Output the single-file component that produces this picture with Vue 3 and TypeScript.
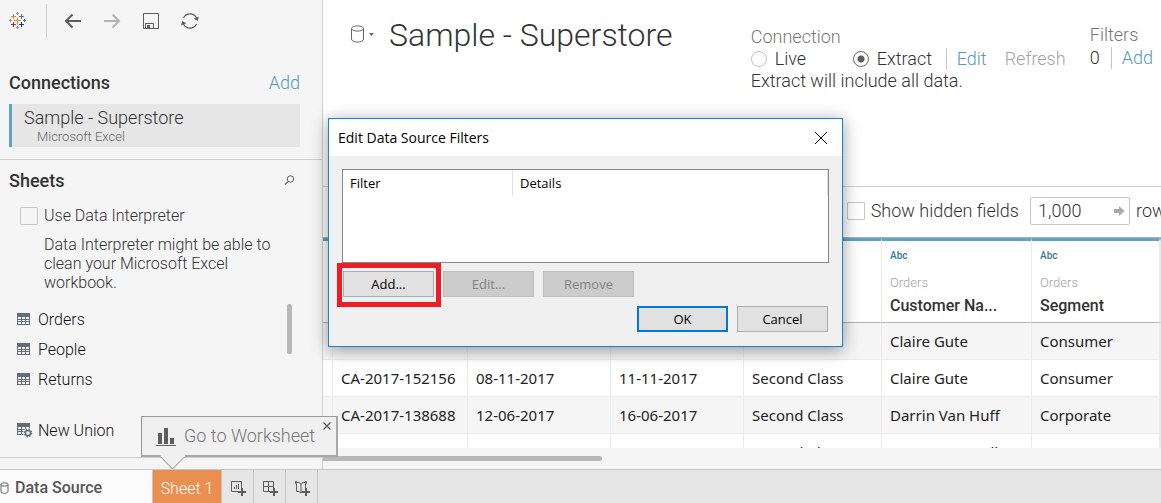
<script setup lang="ts">
import { ref } from 'vue'

interface Column {
  key: string
  label: string
}

const sheets: string[] = ['Orders', 'People', 'Returns']

const columns: Column[] = [
  { key: 'id', label: 'Order ID' },
  { key: 'ordered', label: 'Order Date' },
  { key: 'shipped', label: 'Ship Date' },
  { key: 'mode', label: 'Ship Mode' },
  { key: 'customer', label: 'Customer Na...' },
  { key: 'segment', label: 'Segment' },
]

const rows: string[][] = [
  ['CA-2017-152156', '08-11-2017', '11-11-2017', 'Second Class', 'Claire Gute', 'Consumer'],
  ['CA-2017-152156', '08-11-2017', '11-11-2017', 'Second Class', 'Claire Gute', 'Consumer'],
  ['CA-2017-138688', '12-06-2017', '16-06-2017', 'Second Class', 'Darrin Van Huff', 'Corporate'],
  ['US-2016-108966', '11-10-2016', '18-10-2016', 'Second Class', "Sean O'Donnell", 'Consumer'],
]

const connection = ref<string>('extract')
const interpreter = ref<boolean>(false)
const showHidden = ref<boolean>(false)
const rowCount = ref<string>('1,000')
</script>

<template>
  <div class="app">
    <div class="workspace">
      <aside class="sidebar">
        <nav class="tools">
          <span class="logo">
            <svg width="18" height="18" viewBox="0 0 18 18" fill="none">
              <path d="M8.500 5.500v7M5 8.500h7" stroke="#e8862c" />
              <path d="M4.500 2v5M2 4.500h5" stroke="#e8862c" />
              <path d="M12.500 2v5M10 4.500h5" stroke="#4e79a0" />
              <path d="M4.500 10v5M2 12.500h5" stroke="#c72037" />
              <path d="M12.500 10v5M10 12.500h5" stroke="#1f3567" />
              <path d="M8.500 0v3M7 1.500h3M8.500 14v3M7 15.500h3M1.500 7v3M0 8.500h3" stroke="#7c9fb0" />
              <path d="M15.500 7v3M14 8.500h3" stroke="#5b6591" />
            </svg>
          </span>
          <button type="button" aria-label="Back">
            <svg width="18" height="18" viewBox="0 0 18 18" fill="none" stroke="#5d5d5d" stroke-width="2">
              <path d="M17 9H2M8.500 2.500L2 9l6.500 6.500" />
            </svg>
          </button>
          <button type="button" aria-label="Forward">
            <svg width="18" height="18" viewBox="0 0 18 18" fill="none" stroke="#b4b4b4" stroke-width="2">
              <path d="M1 9h15M9.500 2.500L16 9l-6.500 6.500" />
            </svg>
          </button>
          <button type="button" aria-label="Save">
            <svg width="18" height="18" viewBox="0 0 18 18" fill="none" stroke="#5d5d5d">
              <path d="M1.500 1.500h15v15h-15zM3.500 16V11.500h8V16" />
              <path d="M5 13h3v3H5z" fill="#5d5d5d" stroke="none" />
            </svg>
          </button>
          <button type="button" aria-label="Refresh data">
            <svg width="18" height="18" viewBox="0 0 18 18" fill="none" stroke="#5d5d5d" stroke-width="1.200">
              <path d="M2.500 6A7.200 7.200 0 0 1 15.500 6M15.500 12A7.200 7.200 0 0 1 2.500 12" />
              <path d="M17.800 4.500L16.800 9L12.800 6.800zM.2 13.500L1.200 9L5.200 11.200z" fill="#5d5d5d" stroke="none" />
            </svg>
          </button>
        </nav>

        <section class="connections">
          <header>
            <h2>Connections</h2>
            <a href="#">Add</a>
          </header>
          <button type="button" class="connection-card">
            <strong>Sample - Superstore</strong>
            <small>Microsoft Excel</small>
          </button>
        </section>

        <section class="sheets">
          <header>
            <h2>Sheets</h2>
            <button type="button" aria-label="Search sheets">
              <svg width="11" height="11" viewBox="0 0 11 11" fill="none" stroke="#5d5d5d">
                <circle cx="6.500" cy="4" r="3.200" />
                <path d="M4.200 6.400L1 9.500" stroke-width="1.300" />
              </svg>
            </button>
          </header>
          <label class="check">
            <input v-model="interpreter" type="checkbox" />
            Use Data Interpreter
          </label>
          <p>Data Interpreter might be able to clean your Microsoft Excel workbook.</p>
          <div class="sheet-list">
            <ul>
              <li v-for="sheet in sheets" :key="sheet">
                <svg width="14" height="13" viewBox="0 0 14 13">
                  <path d="M0 0h13v12H0z" fill="#626c7c" />
                  <path d="M1 4h3v2H1zM5 4h3v2H5zM9 4h3v2H9zM1 7h3v1H1zM5 7h3v1H5zM9 7h3v1H9zM1 9h3v2H1zM5 9h3v2H5zM9 9h3v2H9z" fill="#f5f5f5" />
                </svg>
                {{ sheet }}
              </li>
            </ul>
            <span class="thumb"></span>
          </div>
          <button type="button" class="union">
            <svg width="16" height="15" viewBox="0 0 16 15">
              <path d="M0 0h13v12H0z" fill="#626c7c" />
              <path d="M1 4h3v2H1zM5 4h3v2H5zM9 4h3v2H9zM1 7h3v1H1zM5 7h3v1H5zM1 9h3v2H1zM5 9h3v2H5z" fill="#f5f5f5" />
              <circle cx="11" cy="10" r="4.800" fill="#f5f5f5" />
              <circle cx="11" cy="10" r="2.600" fill="none" stroke="#626c7c" stroke-width="1.500" />
              <circle cx="11" cy="10" r="3.700" fill="none" stroke="#626c7c" stroke-width="1.200" stroke-dasharray="1.450" />
            </svg>
            New Union
          </button>
        </section>
      </aside>

      <main class="main">
        <header class="source">
          <button type="button" class="source-menu" aria-label="Data source options">
            <svg width="24" height="18" viewBox="0 0 24 18" fill="none" stroke="#666">
              <ellipse cx="7.500" cy="3.500" rx="6" ry="2.600" />
              <path d="M1.500 3.500v10.500c0 4 12 4 12 0V3.500" />
              <path d="M19 8h5l-2.500 3z" fill="#666" stroke="none" />
            </svg>
          </button>
          <h1>Sample - Superstore</h1>
          <div class="mode">
            <span class="caption">Connection</span>
            <div class="mode-row">
              <label class="live"><input v-model="connection" type="radio" value="live" />Live</label>
              <label class="extract"><input v-model="connection" type="radio" value="extract" />Extract</label>
              <a href="#" class="ruled">Edit</a>
              <span class="disabled">Refresh</span>
            </div>
            <span>Extract will include all data.</span>
          </div>
          <div class="filters">
            <span class="caption">Filters</span>
            <div class="filter-row">
              <span>0</span>
              <a href="#" class="ruled">Add</a>
            </div>
          </div>
        </header>

        <div class="grid-tools">
          <label class="check">
            <input v-model="showHidden" type="checkbox" />
            Show hidden fields
          </label>
          <div class="row-count">
            <input id="row-count" v-model="rowCount" type="text" />
            <svg width="11" height="10" viewBox="0 0 11 10"><path d="M0 3h5V0l5.500 5L5 10V7H0z" fill="#aaa" /></svg>
          </div>
          <label for="row-count" class="row-label">rows</label>
        </div>

        <div class="grid">
          <table>
            <colgroup>
              <col class="c-gutter" />
              <col v-for="column in columns" :key="column.key" :class="'c-' + column.key" />
              <col />
            </colgroup>
            <thead>
              <tr>
                <td></td>
                <th v-for="column in columns" :key="column.key" scope="col">
                  <span class="type">Abc</span>
                  <span class="origin">Orders</span>
                  <span>{{ column.label }}</span>
                </th>
                <td></td>
              </tr>
            </thead>
            <tbody>
              <tr v-for="(row, index) in rows" :key="index">
                <td></td>
                <td v-for="(cell, position) in row" :key="position">{{ cell }}</td>
                <td></td>
              </tr>
            </tbody>
          </table>
        </div>
        <div class="scroll"><span></span></div>
      </main>
    </div>

    <footer class="tabs">
      <button type="button" class="tab source-tab">
        <svg width="10" height="12" viewBox="0 0 10 12" fill="none" stroke="#666">
          <ellipse cx="4.500" cy="2.500" rx="3.500" ry="1.700" />
          <path d="M1 2.500v7c0 2.400 7 2.400 7 0v-7" />
        </svg>
        Data Source
      </button>
      <div class="sheet-tab">
        <button type="button" class="tab active">Sheet 1</button>
        <div class="hint" role="tooltip">
          <svg width="20" height="19" viewBox="0 0 20 19" fill="#5d5d5d">
            <path d="M2 6h4v11H2zM8 1h4v16H8zM14 11h4v6h-4zM0 18h20v1H0z" />
          </svg>
          <span>Go to Worksheet</span>
          <button type="button" aria-label="Close hint">
            <svg width="8" height="8" viewBox="0 0 8 8" stroke="#555" stroke-width="1.200"><path d="M.5.5l7 7M7.500.5l-7 7" /></svg>
          </button>
          <svg class="pointer" width="26" height="15" viewBox="0 0 26 15">
            <path d="M.5 0v1.500L12.500 14L25 1.500V0" fill="#f0f0f0" />
            <path d="M.5 1.500L12.500 14L25 1.500" fill="none" stroke="#888" />
          </svg>
        </div>
      </div>
      <button type="button" class="tab add" aria-label="New worksheet">
        <svg width="16" height="16" viewBox="0 0 16 16" fill="none" stroke="#5d5d5d">
          <path d="M7 10.500H.5V.5h10V7M3.500 6v2M5.500 4v4M7.500 3v5" />
          <path d="M11 7v8M7 11h8" stroke-width="2" />
        </svg>
      </button>
      <button type="button" class="tab add" aria-label="New dashboard">
        <svg width="16" height="16" viewBox="0 0 16 16" fill="none" stroke="#5d5d5d">
          <path d="M7 10.500H.5V.5h10V7M5.500.5v10M.5 5.500h10" />
          <path d="M11 7v8M7 11h8" stroke-width="2" />
        </svg>
      </button>
      <button type="button" class="tab add" aria-label="New story">
        <svg width="16" height="16" viewBox="0 0 16 16" fill="none" stroke="#5d5d5d">
          <path d="M6 12V3L4 1.500H1.500V.5H.5V2.500H1.500V10.500H4L6 12L7 11M6 3L8 1.500H10.500V.5H11.500V2.500H10.500V7" />
          <path d="M11 7v8M7 11h8" stroke-width="2" />
        </svg>
      </button>
    </footer>

    <div class="dialog" role="dialog" aria-labelledby="dialog-title">
      <header>
        <h2 id="dialog-title">Edit Data Source Filters</h2>
        <button type="button" aria-label="Close">
          <svg width="14" height="14" viewBox="0 0 14 14" stroke="#000"><path d="M1 1l12 12M13 1L1 13" /></svg>
        </button>
      </header>
      <div class="dialog-body">
        <div class="filter-list">
          <table>
            <thead>
              <tr>
                <th scope="col" class="filter-name">Filter</th>
                <th scope="col">Details</th>
              </tr>
            </thead>
          </table>
        </div>
        <div class="actions">
          <button type="button" class="marked">Add...</button>
          <button type="button" disabled>Edit...</button>
          <button type="button" disabled>Remove</button>
        </div>
        <div class="actions confirm">
          <button type="button" class="default">OK</button>
          <button type="button">Cancel</button>
        </div>
      </div>
    </div>
  </div>
</template>

<style>
body {
  margin: 0;
}
</style>

<style scoped>
* {
  box-sizing: border-box;
}

.app {
  position: relative;
  display: flex;
  flex-direction: column;
  height: 100vh;
  overflow: hidden;
  background: #fff;
  color: #333;
  font: 300 16px/22px Roboto, "Liberation Sans", sans-serif;
}

h1,
h2,
p,
ul {
  margin: 0;
  padding: 0;
}

button {
  padding: 0;
  border: 0;
  background: none;
  color: inherit;
  font: inherit;
}

svg {
  display: block;
  flex: none;
}

a {
  color: #4f9cbf;
  text-decoration: none;
}

input {
  margin: 0;
  font: inherit;
  color: inherit;
}

input[type="checkbox"] {
  appearance: none;
  flex: none;
  width: 18px;
  height: 18px;
  border: 1px solid #c6c6c6;
  border-radius: 1px;
}

input[type="radio"] {
  appearance: none;
  flex: none;
  width: 16px;
  height: 16px;
  border: 1px solid #c2c2c2;
  border-radius: 50%;
}

input[type="radio"]:checked {
  border-color: #666;
  background: radial-gradient(circle, #5d5d5d 3px, #fff 4px);
}

.check {
  display: flex;
  align-items: center;
  gap: 6px;
}

.workspace {
  display: flex;
  flex: 1;
  min-height: 0;
}

/* Sidebar */
.sidebar {
  display: flex;
  flex-direction: column;
  flex: none;
  width: 323px;
  border-right: 1px solid #cfcfcf;
  background: #f5f5f5;
}

.tools {
  display: flex;
  align-items: center;
  gap: 21px;
  height: 42px;
  padding-left: 9px;
}

.logo {
  display: flex;
  align-items: center;
  width: 38px;
  height: 34px;
  margin-right: -4px;
  border-right: 1px solid #cfcfcf;
}

.sidebar h2 {
  font-size: 18px;
  font-weight: 500;
}

.sidebar section > header {
  display: flex;
  align-items: center;
  justify-content: space-between;
}

.connections {
  padding: 30px 22px 12px 9px;
  border-bottom: 1px solid #cfcfcf;
}

.connections > header {
  height: 22px;
}

.connections > header a {
  font-size: 18px;
}

.connection-card {
  display: flex;
  flex-direction: column;
  width: 100%;
  height: 43px;
  margin-top: 10px;
  padding: 4px 12px;
  border-left: 3px solid #5fa2c4;
  background: #e6e6e6;
  text-align: left;
}

.connection-card strong {
  font-size: 18px;
  font-weight: 300;
  line-height: 20px;
}

.connection-card small {
  padding-left: 13px;
  color: #666;
  font-size: 13px;
  line-height: 18px;
}

.sheets {
  flex: 1;
  margin-bottom: 11px;
  border-bottom: 1px solid #cfcfcf;
}

.sheets > header {
  height: 41px;
  padding: 0 27px 0 9px;
}

.sheets .check {
  height: 30px;
  padding-left: 20px;
}

.sheets p {
  padding: 4px 40px 12px 44px;
  line-height: 19px;
}

.sheet-list {
  display: flex;
  justify-content: space-between;
  height: 111px;
  padding-right: 30px;
}

.sheet-list ul {
  list-style: none;
  color: #111;
}

.sheet-list li,
.union {
  display: flex;
  align-items: center;
  gap: 7px;
  height: 30px;
  padding: 1px 0 0 17px;
}

.union {
  gap: 5px;
  color: #111;
}

.thumb {
  width: 5px;
  height: 50px;
  border-radius: 2px;
  background: #b7b7b7;
}

/* Data source header */
.main {
  display: flex;
  flex-direction: column;
  flex: 1;
  min-width: 0;
  overflow: hidden;
}

.source {
  display: flex;
  flex: none;
  align-items: flex-start;
  height: 187px;
  padding: 24px 8px 0 27px;
  border-bottom: 1px solid #cfcfcf;
  font-size: 18px;
  white-space: nowrap;
}

.source-menu {
  padding-top: 1px;
}

h1 {
  flex: 1;
  margin-top: -7px;
  padding-left: 15px;
  font-size: 32px;
  font-weight: 300;
  line-height: 36px;
}

.caption {
  color: #777;
}

.mode,
.filters {
  display: flex;
  flex-direction: column;
}

.mode {
  width: 339px;
  padding-top: 2px;
}

.mode-row,
.filter-row,
.mode-row label {
  display: flex;
  align-items: center;
}

.mode-row label {
  gap: 8px;
}

.live {
  width: 102px;
}

.extract {
  width: 93px;
}

.ruled {
  padding-left: 10px;
  border-left: 1px solid #c6c6c6;
}

.disabled {
  padding-left: 18px;
  color: #a3a3a3;
}

.filters {
  gap: 1px;
}

.filter-row {
  gap: 11px;
}

/* Grid */
.grid-tools {
  display: flex;
  flex: none;
  align-items: center;
  justify-content: flex-end;
  height: 51px;
  padding-bottom: 2px;
  border-bottom: 1px solid #b4b4b4;
  font-size: 18px;
}

.row-count {
  display: flex;
  align-items: center;
  width: 100px;
  height: 28px;
  margin: 0 6px 0 11px;
  padding-right: 4px;
  border: 1px solid #c6c6c6;
  border-radius: 2px;
}

.row-count input {
  flex: 1;
  width: 0;
  padding: 0 7px;
  border: 0;
  background: none;
  outline: none;
}

.row-label {
  width: 25px;
  overflow: hidden;
}

.grid {
  flex: 1;
  min-height: 0;
  overflow: hidden;
}

.grid table {
  width: 100%;
  table-layout: fixed;
  border-collapse: separate;
  border-spacing: 0;
  color: #222;
  font: 400 15px/22px "Noto Sans", sans-serif;
}

.c-gutter {
  width: 10px;
}

.c-id {
  width: 135px;
}

.c-ordered {
  width: 143px;
}

.c-shipped {
  width: 133px;
}

.c-mode {
  width: 138px;
}

.c-customer {
  width: 150px;
}

.c-segment {
  width: 128px;
}

.grid td,
.grid th {
  height: 37px;
  padding: 0 0 0 8px;
  border-right: 1px solid #ebebeb;
  border-bottom: 1px solid #ebebeb;
  text-align: left;
  white-space: nowrap;
}

.grid td:last-child,
.grid td:first-child {
  padding: 0;
}

.grid thead td,
.grid thead th {
  height: 85px;
  border-top: 3px solid #5fa2c4;
  border-bottom-color: #b4b4b4;
}

.grid thead th {
  padding-bottom: 4px;
  color: #333;
  font: 500 16px/22px Roboto, sans-serif;
}

.grid th span {
  display: block;
}

.grid th .type {
  color: #36789a;
  font-size: 10px;
  line-height: 28px;
}

.grid th .origin {
  color: #a3a3a3;
  font-size: 13px;
  font-weight: 300;
  line-height: 25px;
}

.grid tbody tr:nth-child(odd) {
  background: #f5f5f5;
}

.grid tbody td:first-child {
  background: #fff;
}

.grid tbody tr:nth-child(odd) td:first-child,
.scroll {
  background: #f5f5f5;
}

.scroll {
  flex: none;
  height: 21px;
  padding-top: 8px;
}

.scroll span {
  display: block;
  width: 33.300%;
  height: 5px;
  border-radius: 0 3px 3px 0;
  background: #b7b7b7;
}

.grid tbody tr:nth-child(even) {
  background: #fff;
}

/* Row striping starts shaded, and the gutter follows its row */

/* Bottom tabs */
.tabs {
  display: flex;
  flex: none;
  height: 34px;
  border-top: 1px solid #c6c6c6;
  background: #e6e6e6;
}

.tab {
  display: flex;
  align-items: center;
  height: 100%;
  padding-top: 3px;
  border-right: 1px solid #c6c6c6;
}

.source-tab {
  gap: 5px;
  width: 153px;
  background: #fbfbfb;
  color: #555;
  font-weight: 500;
}

.sheet-tab {
  position: relative;
}

.active {
  justify-content: center;
  width: 69px;
  padding-top: 5px;
  background: #eb8f50;
  color: #fff;
}

.add {
  width: 32px;
  padding: 5px 0 0 9px;
}

.hint {
  position: absolute;
  bottom: 46px;
  left: -12px;
  display: flex;
  align-items: center;
  gap: 8px;
  width: 197px;
  height: 41px;
  padding-left: 14px;
  border: 1px solid #999;
  border-width: 1px 2px 2px 1px;
  border-color: #999 #a8a8a8 #a8a8a8 #999;
  background: #f0f0f0;
  color: #777;
  font-size: 18px;
  white-space: nowrap;
}

.hint button {
  position: absolute;
  top: 5px;
  right: 5px;
}

.pointer {
  position: absolute;
  top: 38px;
  left: 18px;
}

/* Dialog */
.dialog {
  position: absolute;
  top: 118px;
  left: 328px;
  width: 515px;
  border: 1px solid #1883d7;
  background: #f0f0f0;
  box-shadow: 0 3px 16px rgba(0, 0, 0, 0.4);
  color: #000;
  font: 400 13px/18px "Open Sans", sans-serif;
}

.dialog > header {
  display: flex;
  align-items: center;
  justify-content: space-between;
  height: 37px;
  padding: 0 14px 0 9px;
  background: #fff;
}

.dialog h2 {
  font: 400 14px/20px "Open Sans", sans-serif;
}

.dialog-body {
  padding: 13px 13px 14px;
}

.filter-list {
  height: 94px;
  border: 1px solid #828790;
  background: #fff;
}

.filter-list table {
  width: 100%;
  table-layout: fixed;
  border-spacing: 0;
}

.filter-list th {
  height: 26px;
  padding: 0 7px;
  border-right: 1px solid #e2e2e2;
  font-weight: 400;
  text-align: left;
}

.filter-name {
  width: 170px;
}

.actions {
  display: flex;
  gap: 9px;
  padding: 8px 1px 0;
}

.actions button {
  width: 91px;
  height: 26px;
  border: 1px solid #adadad;
  background: #e1e1e1;
}

.actions button:disabled {
  border-color: #bfbfbf;
  background: #ccc;
  color: #838383;
}

.actions .marked {
  position: relative;
}

/* Highlight ring around the call-to-action */
.marked::after {
  content: "";
  position: absolute;
  inset: -9px -8px -11px -7px;
  border: 5px solid #ee1c25;
}

.confirm {
  justify-content: flex-end;
  padding-top: 9px;
}

.actions .default {
  border: 2px solid #0078d7;
}
</style>
